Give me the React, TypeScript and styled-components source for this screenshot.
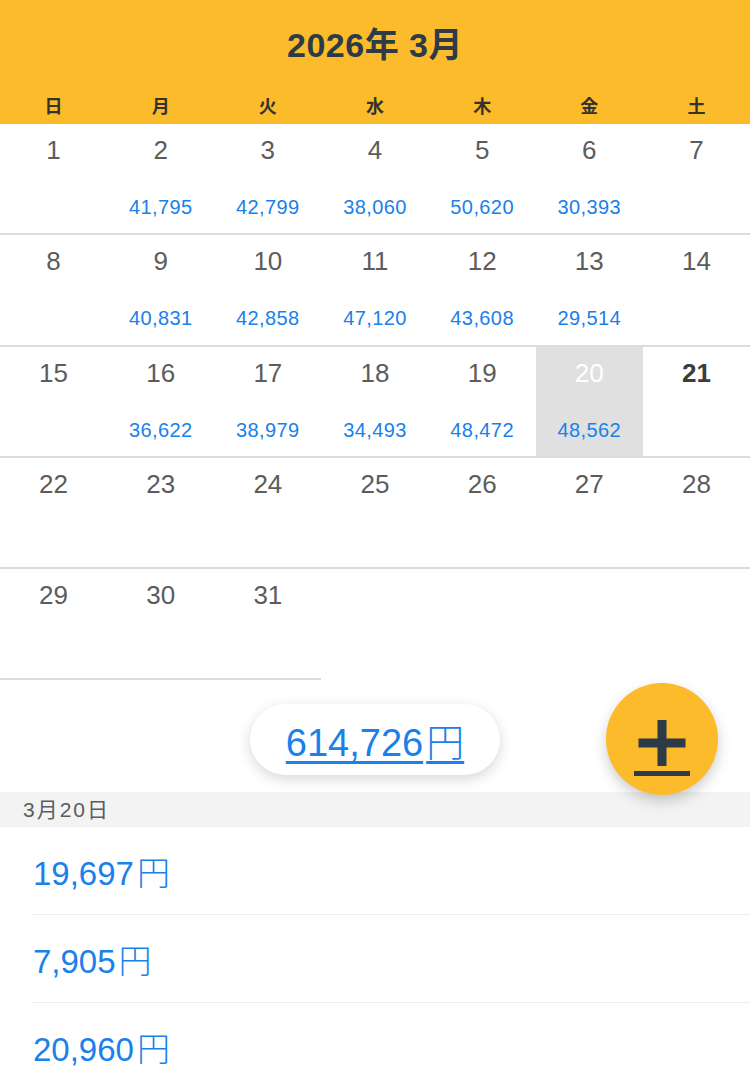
import React from 'react';
import styled, { createGlobalStyle } from 'styled-components';

const FONT = `"Liberation Sans", "Noto Sans CJK JP", sans-serif`;

const colors = {
  yellow: '#fcbb2b',
  ink: '#2d3a47',
  grey: '#5c5c5c',
  blue: '#1a80ea',
  line: '#dcdcdc',
  selected: '#e0e0e0',
  band: '#f3f3f3',
};

const GlobalStyle = createGlobalStyle`
  html, body {
    margin: 0;
    padding: 0;
    background: #fff;
    font-family: ${FONT};
    overflow: hidden;
  }
  * { box-sizing: border-box; }
`;

const WEEKDAYS = ['日', '月', '火', '水', '木', '金', '土'];

const AMOUNTS: Record<number, string> = {
  2: '41,795', 3: '42,799', 4: '38,060', 5: '50,620', 6: '30,393',
  9: '40,831', 10: '42,858', 11: '47,120', 12: '43,608', 13: '29,514',
  16: '36,622', 17: '38,979', 18: '34,493', 19: '48,472', 20: '48,562',
};

const SELECTED = 20;
const TODAY = 21;
const ENTRIES = ['19,697', '7,905', '20,960'];

function App() {
  const days = Array.from({ length: 31 }, (_, i) => i + 1);

  return (
    <Page>
      <GlobalStyle />
      <Header>
        <Title>2026年 3月</Title>
        <WeekRow>
          {WEEKDAYS.map((w) => (
            <WeekLabel key={w}>{w}</WeekLabel>
          ))}
        </WeekRow>
      </Header>

      <Grid>
        {days.map((d) => (
          <DayCell key={d} $selected={d === SELECTED}>
            <DayNumber $selected={d === SELECTED} $today={d === TODAY}>
              {d}
            </DayNumber>
            <DayAmount>{AMOUNTS[d] ?? ''}</DayAmount>
          </DayCell>
        ))}
      </Grid>

      <TotalArea>
        <TotalPill>
          <TotalText>
            614,726<Yen>円</Yen>
          </TotalText>
        </TotalPill>
        <Fab aria-label="add">
          <svg width="60" height="64" viewBox="0 0 60 64">
            <rect x="25.5" y="8" width="9" height="46" fill={colors.ink} />
            <rect x="6.5" y="26.5" width="47" height="9" fill={colors.ink} />
            <rect x="2" y="59" width="56" height="5" fill={colors.ink} />
          </svg>
        </Fab>
      </TotalArea>

      <SectionHeader>3月20日</SectionHeader>
      <List>
        {ENTRIES.map((e) => (
          <ListRow key={e}>
            <Amount>
              {e}
              <Yen>円</Yen>
            </Amount>
          </ListRow>
        ))}
      </List>
    </Page>
  );
}

export default App;

const Page = styled.div`
  width: 750px;
  height: 1070px;
  overflow: hidden;
  background: #fff;
`;

const Header = styled.header`
  background: ${colors.yellow};
  height: 124px;
  padding-top: 23px;
  display: flex;
  flex-direction: column;
`;

const Title = styled.h1`
  margin: 0;
  text-align: center;
  font-size: 34px;
  line-height: 44px;
  font-weight: 700;
  letter-spacing: 0.5px;
  color: ${colors.ink};
`;

const WeekRow = styled.div`
  display: grid;
  grid-template-columns: repeat(7, 1fr);
  margin-top: 28px;
`;

const WeekLabel = styled.div`
  text-align: center;
  font-size: 18px;
  line-height: 24px;
  font-weight: 700;
  color: #33332c;
`;

const Grid = styled.div`
  display: grid;
  grid-template-columns: repeat(7, 1fr);
  grid-auto-rows: 111.25px;
`;

const DayCell = styled.div<{ $selected: boolean }>`
  display: flex;
  flex-direction: column;
  align-items: center;
  padding-top: 11px;
  border-bottom: 2px solid ${colors.line};
  background: ${(p) => (p.$selected ? colors.selected : '#fff')};
`;

const DayNumber = styled.div<{ $selected: boolean; $today: boolean }>`
  font-size: 26px;
  line-height: 30px;
  font-weight: ${(p) => (p.$today ? 700 : 400)};
  color: ${(p) => (p.$selected ? '#fff' : p.$today ? '#3c3c3c' : colors.grey)};
`;

const DayAmount = styled.div`
  margin-top: 30px;
  font-size: 20px;
  line-height: 24px;
  letter-spacing: 0.4px;
  color: ${colors.blue};
`;

const TotalArea = styled.div`
  position: relative;
  height: 112px;
  padding-top: 24px;
  display: flex;
  justify-content: center;
  align-items: flex-start;
`;

const TotalPill = styled.div`
  width: 250px;
  height: 71px;
  border-radius: 36px;
  background: #fff;
  box-shadow: 0 4px 14px rgba(0, 0, 0, 0.16);
  display: flex;
  align-items: center;
  justify-content: center;
`;

const TotalText = styled.span`
  font-size: 38px;
  color: ${colors.blue};
  text-decoration: underline;
  text-decoration-thickness: 3px;
  text-underline-offset: 5px;
`;

const Yen = styled.span`
  margin-left: 3px;
  font-family: "Noto Sans CJK JP", sans-serif;
  font-weight: 300;
`;

const Fab = styled.button`
  position: absolute;
  top: 3px;
  right: 32px;
  width: 112px;
  height: 112px;
  border: none;
  border-radius: 50%;
  background: ${colors.yellow};
  box-shadow: 0 6px 14px rgba(0, 0, 0, 0.2);
  display: flex;
  align-items: center;
  justify-content: center;
  padding: 0;
  z-index: 2;
  svg {
    margin-top: 10px;
  }
`;

const SectionHeader = styled.div`
  height: 35px;
  padding-left: 23px;
  background: ${colors.band};
  font-size: 21px;
  line-height: 35px;
  letter-spacing: 2px;
  color: ${colors.grey};
`;

const List = styled.div`
  display: flex;
  flex-direction: column;
`;

const ListRow = styled.div`
  height: 88px;
  margin-left: 32px;
  border-bottom: 1px solid #ececec;
  display: flex;
  align-items: center;
`;

const Amount = styled.div`
  padding-left: 1px;
  font-size: 33px;
  color: ${colors.blue};
`;
